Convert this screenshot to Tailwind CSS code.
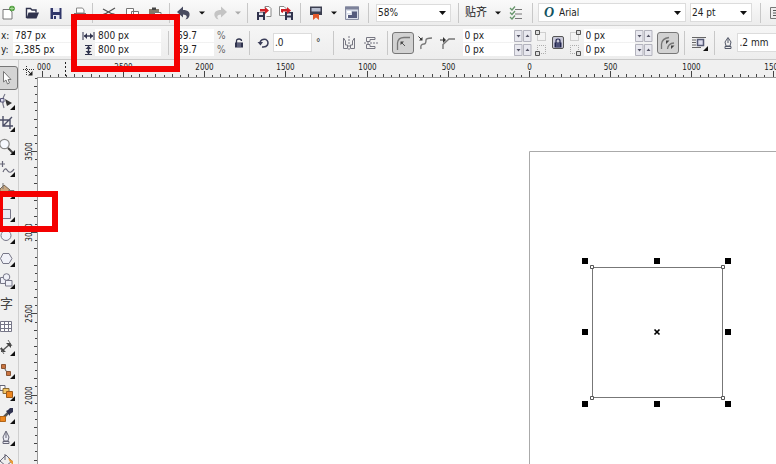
<!DOCTYPE html>
<html lang="zh-CN">
<head>
    <meta charset="UTF-8">
    <meta name="viewport" content="width=device-width, initial-scale=1.0">
    <title>Drawing</title>
    <script src="https://cdn.jsdelivr.net/npm/@tailwindcss/browser@4"></script>
</head>
<body class="relative flex h-screen flex-col overflow-hidden bg-[#f0f0f0] font-['DejaVu_Sans_Condensed','Noto_Sans','Noto_Sans_CJK_SC',sans-serif] text-[10px] leading-[13px] text-[#222]">

    <!-- Standard toolbar -->
    <header class="flex h-[26px] shrink-0 items-center overflow-hidden border-b border-[#d2d2d2] bg-gradient-to-b from-[#fafafa] to-[#ececec]">
        <div class="-ml-1 flex shrink-0">
            <button aria-label="New" class="flex w-6 justify-center">
                <svg class="size-4" viewBox="0 0 16 16"><path d="M3 4.500H10L12 7V14H3Z" fill="#fff" stroke="#777" /><circle cx="12" cy="3.500" r="2.800" fill="#4d9b3c" /><path d="M12 1.500v4M10 3.500h4" stroke="#a5d894" /></svg>
            </button>
            <button aria-label="Open" class="flex w-6 justify-center">
                <svg class="size-4" viewBox="0 0 16 16"><path d="M2.500 13V3.500H6.500L8 5H12V7.500" fill="#fff" stroke="#30334d" stroke-width="1.400" /><path d="M4.500 7.500H15L12.500 13.500H2.500Z" fill="#30334d" /></svg>
            </button>
            <button aria-label="Save" class="flex w-6 justify-center">
                <svg class="size-4" viewBox="0 0 16 16"><path d="M2.500 3H13.500V14H2.500Z" fill="#30366a" /><path d="M5 3H11.500V7H5ZM5 10H11.500V14H5Z" fill="#e8e9f2" /><path d="M6 11h2v3H6Z" fill="#30366a" /></svg>
            </button>
            <button aria-label="Print" class="flex w-6 justify-center">
                <svg class="size-4" viewBox="0 0 16 16"><path d="M4.500 3H10.500L12 5V8H4.500Z" fill="#fff" stroke="#888" /><path d="M2 8H14V14H2Z" fill="#777" /></svg>
            </button>
        </div>
        <i class="mr-1 h-5 w-px shrink-0 bg-[#c8c8c8]"></i>
        <div class="flex shrink-0">
            <button aria-label="Cut" class="flex w-[23px] justify-center">
                <svg class="size-4" viewBox="0 0 16 16" fill="none" stroke="#555" stroke-width="1.300"><path d="M2 4L13 10M14 3L4 9" /><circle cx="4" cy="11" r="2" /><circle cx="12" cy="11" r="2" /></svg>
            </button>
            <button aria-label="Copy" class="flex w-[23px] justify-center">
                <svg class="size-4" viewBox="0 0 16 16" fill="#fff" stroke="#777"><path d="M2.500 3.500H9.500V11.500H2.500ZM7.500 6.500H14.500V14.500H7.500Z" /></svg>
            </button>
            <button aria-label="Paste" class="flex w-[23px] justify-center">
                <svg class="size-4" viewBox="0 0 16 16"><path d="M2 4H12V14H2Z" fill="#857b6c" /><path d="M5 2.500H9V5H5Z" fill="#444" /><path d="M7.500 7.500H14V14H7.500Z" fill="#fff" stroke="#777" /></svg>
            </button>
        </div>
        <i class="ml-[3px] h-5 w-px shrink-0 bg-[#c8c8c8]"></i>
        <button aria-label="Undo" class="ml-1 flex w-5 shrink-0 justify-center">
            <svg class="size-4" viewBox="0 0 16 16"><path d="M1 7L7 1.500V5C12 5 15 7.500 13 12Q12 14 9.500 14.500Q13 10 7 9.500V12.500Z" fill="#484b60" /></svg>
        </button>
        <button aria-label="Undo list" class="flex w-4 shrink-0 justify-center"><svg class="h-1 w-[6px]" viewBox="0 0 6 4"><path d="M0 0.500H6L3 3.500Z" fill="#111" /></svg></button>
        <button aria-label="Redo" class="flex w-5 shrink-0 justify-center" disabled>
            <svg class="size-4" viewBox="0 0 16 16"><path d="M15 7L9 1.500V5C4 5 1 7.500 3 12Q4 14 6.500 14.500Q3 10 9 9.500V12.500Z" fill="#c4c4c4" /></svg>
        </button>
        <button aria-label="Redo list" class="flex w-4 shrink-0 justify-center" disabled><svg class="h-1 w-[6px]" viewBox="0 0 6 4"><path d="M0 0.500H6L3 3.500Z" fill="#aaa" /></svg></button>
        <i class="ml-px h-5 w-px shrink-0 bg-[#c8c8c8]"></i>
        <button aria-label="Import" class="ml-1 flex w-6 shrink-0 justify-center">
            <svg class="size-4" viewBox="0 0 16 16"><path d="M9 3.500V1.500H13L15 3.500V11.500H10.500" fill="#fff" stroke="#888" /><path d="M1 7H9V15H1Z" fill="#30334d" /><path d="M3 7.500H7V10H3ZM3 12H7V15H3Z" fill="#e4e4ee" /><path d="M4 4H9V2L13 5.500L9 9V6.500H4Z" fill="#cf2027" /></svg>
        </button>
        <button aria-label="Export" class="flex w-5 shrink-0 justify-center">
            <svg class="size-4" viewBox="0 0 16 16"><path d="M1.500 10.500V1.500H6L8 3.500V10.500Z" fill="#fff" stroke="#888" /><path d="M7 7H15V15H7Z" fill="#30334d" /><path d="M9 8.500H13V10.500H9ZM9 12.500H13V15H9Z" fill="#e4e4ee" /><path d="M3 7V4H9V2L13 5.500L9 9V6.500H5V8Z" fill="#cf2027" /></svg>
        </button>
        <i class="ml-1 h-5 w-px shrink-0 bg-[#c8c8c8]"></i>
        <button aria-label="Application launcher" class="ml-[3px] flex w-6 shrink-0 justify-center">
            <svg class="size-4" viewBox="0 0 16 16"><path d="M2 1.500H14V10H2Z" fill="#3c3f50" /><path d="M3.500 3H12.500V6.500H3.500Z" fill="#b8bfd0" /><path d="M5 9H11V15L8 12.500L5 15Z" fill="#e2592b" /></svg>
        </button>
        <button aria-label="Launcher list" class="flex w-3 shrink-0 justify-center"><svg class="h-1 w-[6px]" viewBox="0 0 6 4"><path d="M0 0.500H6L3 3.500Z" fill="#111" /></svg></button>
        <button aria-label="Welcome screen" class="flex w-6 shrink-0 justify-center">
            <svg class="size-4" viewBox="0 0 16 16"><path d="M1.500 2H14.500V14.500H1.500Z" fill="#d9deea" stroke="#8a8ea2" /><path d="M1 1.500H15V4.500H1Z" fill="#7d829a" /><path d="M3 6H7V8H3ZM3 9.500H7V13H3Z" fill="#fff" /><path d="M8 6.500H13V13H4V10H8Z" fill="#555b7d" /></svg>
        </button>
        <i class="ml-1 h-5 w-px shrink-0 bg-[#c8c8c8]"></i>
        <div class="relative ml-[7px] flex h-[18px] w-[75px] shrink-0 items-center border border-[#dcdcdc] bg-white">
            <select aria-label="Zoom level" class="w-full appearance-none bg-transparent pl-px outline-none"><option>58%</option><option>100%</option></select>
            <svg class="pointer-events-none absolute right-1 h-1 w-[7px]" viewBox="0 0 7 4"><path d="M0 0H7L3.500 4Z" fill="#111" /></svg>
        </div>
        <i class="ml-[7px] h-5 w-px shrink-0 bg-[#c8c8c8]"></i>
        <button class="ml-[6px] flex shrink-0 items-center gap-2 text-[11px]">贴齐 <svg class="h-1 w-[6px]" viewBox="0 0 6 4"><path d="M0 0.500H6L3 3.500Z" fill="#111" /></svg></button>
        <button aria-label="Options" class="ml-[3px] flex w-6 shrink-0 justify-center">
            <svg class="size-4" viewBox="0 0 16 16" fill="none"><path d="M7 4.500H14M7 9H14M7 13.500H14" stroke="#777" /><path d="M2 3L4 5L7 1.500M2 7.500L4 9.500L7 6M2 12L4 14L7 10.500" stroke="#65966a" stroke-width="1.300" /></svg>
        </button>
        <i class="ml-1 h-5 w-px shrink-0 bg-[#c8c8c8]"></i>
        <div class="relative ml-[5px] flex h-[19px] w-[148px] shrink-0 items-center border border-[#dcdcdc] bg-white">
            <span class="w-5 shrink-0 text-center font-['Liberation_Serif',serif] text-[14px] font-bold italic text-[#125260]">O</span>
            <select aria-label="Font" class="w-full appearance-none bg-transparent outline-none"><option>Arial</option></select>
            <svg class="pointer-events-none absolute right-1 h-1 w-[7px]" viewBox="0 0 7 4"><path d="M0 0H7L3.500 4Z" fill="#111" /></svg>
        </div>
        <div class="relative ml-1 flex h-[19px] w-[62px] shrink-0 items-center border border-[#dcdcdc] bg-white">
            <select aria-label="Font size" class="w-full appearance-none bg-transparent pl-px outline-none"><option>24 pt</option></select>
            <svg class="pointer-events-none absolute right-1 h-1 w-[7px]" viewBox="0 0 7 4"><path d="M0 0H7L3.500 4Z" fill="#111" /></svg>
        </div>
        <i class="ml-2 h-5 w-px shrink-0 bg-[#c8c8c8]"></i>
        <button aria-label="Text properties" class="ml-2 shrink-0">
            <svg class="size-4" viewBox="0 0 16 16"><path d="M1.500 2.500H13V13.500H1.500Z" fill="#eee" stroke="#777" /><path d="M4 5.500H10M4 8H10M4 10.500H10" stroke="#555" /></svg>
        </button>
    </header>

    <!-- Property bar -->
    <section class="flex h-[34px] shrink-0 items-center overflow-hidden border-b border-[#c9c9c9] bg-gradient-to-b from-[#f6f6f6] to-[#ededed]">
        <div class="flex w-[82px] shrink-0 flex-col gap-px pl-px">
            <label class="flex items-center"><span class="w-3">x:</span><input value="787 px" class="h-[13px] w-[58px] bg-white pl-[2px] outline-none"></label>
            <label class="flex items-center"><span class="w-3">y:</span><input value="2,385 px" class="h-[13px] w-[58px] bg-white pl-[2px] outline-none"></label>
        </div>
        <div class="flex w-[86px] shrink-0 flex-col gap-px">
            <label class="flex items-center" aria-label="Width">
                <svg class="h-3 w-[13px]" viewBox="0 0 13 12" fill="none" stroke="#30334d"><path d="M1 2V10M12 2V10" /><path d="M2 6H11" stroke-width="1.400" /><path d="M5 3L2 6L5 9ZM8 3L11 6L8 9Z" fill="#30334d" stroke="none" /></svg>
                <input value="800 px" class="h-[13px] w-[66px] bg-white pl-[3px] outline-none">
            </label>
            <label class="flex items-center" aria-label="Height">
                <svg class="h-3 w-[13px]" viewBox="0 0 13 12" fill="none" stroke="#30334d"><path d="M3 1.500H10M3 10.500H10" /><path d="M6.500 2V10" stroke-width="1.400" /><path d="M3.500 5L6.500 2L9.500 5ZM3.500 7L6.500 10L9.500 7Z" fill="#30334d" stroke="none" /></svg>
                <input value="800 px" class="h-[13px] w-[66px] bg-white pl-[3px] outline-none">
            </label>
        </div>
        <i class="h-6 w-px shrink-0 bg-[#c8c8c8]"></i>
        <div class="ml-[5px] flex w-[54px] shrink-0 flex-col gap-px">
            <label class="flex items-center gap-[3px]"><input value="69.7" class="h-[13px] w-10 bg-white pl-[3px] outline-none"><span class="text-[#666]">%</span></label>
            <label class="flex items-center gap-[3px]"><input value="69.7" class="h-[13px] w-10 bg-white pl-[3px] outline-none"><span class="text-[#666]">%</span></label>
        </div>
        <button aria-label="Lock ratio" class="ml-[5px] shrink-0">
            <svg class="h-[10px] w-3" viewBox="0 0 12 10"><path d="M3.500 5V3Q3.500 1 6 1Q8.500 1 8.500 3" fill="none" stroke="#30334d" stroke-width="1.300" /><path d="M2 4.500H10V9.500H2Z" fill="#30334d" /><path d="M4 6H8M4 8H8" stroke="#8a8da8" /></svg>
        </button>
        <i class="ml-[4px] h-6 w-px shrink-0 bg-[#c8c8c8]"></i>
        <label class="ml-[7px] flex shrink-0 items-center gap-[3px]" aria-label="Rotation">
            <svg class="h-3 w-[13px]" viewBox="0 0 13 12"><path d="M3 5Q5 1.500 9 2.500Q12 4.500 10.500 8Q9 10.500 5 10" fill="none" stroke="#3a3d58" stroke-width="1.500" /><path d="M0.500 5H6L3.500 8.500Z" fill="#3a3d58" /></svg>
            <input value=".0" class="h-[19px] w-[39px] border border-[#dcdcdc] bg-white pl-px outline-none">
            <span class="pl-px">°</span>
        </label>
        <i class="ml-3 h-6 w-px shrink-0 bg-[#c8c8c8]"></i>
        <div class="ml-[7px] flex shrink-0 gap-[6px]">
            <button aria-label="Mirror horizontally"><svg class="size-4" viewBox="0 0 16 16" fill="none" stroke="#777782"><path d="M2.500 3V13.500H6.500V10H4.500V6ZM13.500 3V13.500H9.500V10H11.500V6Z" /><path d="M8 1V15" stroke-dasharray="2 1" /></svg></button>
            <button aria-label="Mirror vertically"><svg class="size-4" viewBox="0 0 16 16" fill="none" stroke="#777782"><path d="M12 2.500H3.500V6.500H7V4.500H12ZM12 13.500H3.500V9.500H7V11.500H12Z" /><path d="M1 8H15" stroke-dasharray="2 1" /></svg></button>
        </div>
        <i class="ml-2 h-6 w-px shrink-0 bg-[#c8c8c8]"></i>
        <button aria-label="Round corner" class="ml-1 flex size-[22px] shrink-0 items-center justify-center rounded-[3px] border border-[#777] bg-[#d2d2d2]">
            <svg class="size-4" viewBox="0 0 16 16" fill="none" stroke="#555"><path d="M2.500 15V8Q3 2.500 9 2.500H15" stroke="#777" stroke-width="1.300" /><path d="M10 11L6.500 7.500" /><path d="M5.500 6.500H9L5.500 10Z" fill="#444" stroke="none" /></svg>
        </button>
        <button aria-label="Scalloped corner" class="ml-[3px] shrink-0">
            <svg class="size-4" viewBox="0 0 16 16" fill="none" stroke="#777"><path d="M4 14Q3 9 7 9Q9 9 9 5Q9 3 15 3" stroke-width="1.400" /><path d="M1.500 1.500L4 4" stroke="#333" /><path d="M5.500 2V5.500H2Z" fill="#333" stroke="none" /></svg>
        </button>
        <button aria-label="Chamfered corner" class="ml-[6px] shrink-0">
            <svg class="size-4" viewBox="0 0 16 16" fill="none" stroke="#777"><path d="M4 14V9.500L10 4H16" stroke-width="1.400" /><path d="M1 5H6" stroke="#333" /><path d="M4 2L7 5L4 8Z" fill="#333" stroke="none" /></svg>
        </button>
        <div class="ml-2 flex shrink-0 flex-col gap-px">
            <div class="flex items-center"><input aria-label="Top left radius" value="0 px" class="h-[13px] w-[51px] bg-white pl-[2px] outline-none"><svg class="h-[12px] w-[18px]" viewBox="0 0 18 12"><path d="M0.500 0.500H8V11.500H0.500ZM9.500 0.500H17V11.500H9.500Z" fill="#e8e8ef" stroke="#b3b3bd" /><path d="M2.500 5H6.500L4.500 7.500ZM11.500 7H15.500L13.500 4.500Z" fill="#556" /></svg></div>
            <div class="flex items-center"><input aria-label="Bottom left radius" value="0 px" class="h-[13px] w-[51px] bg-white pl-[2px] outline-none"><svg class="h-[12px] w-[18px]" viewBox="0 0 18 12"><path d="M0.500 0.500H8V11.500H0.500ZM9.500 0.500H17V11.500H9.500Z" fill="#e8e8ef" stroke="#b3b3bd" /><path d="M2.500 5H6.500L4.500 7.500ZM11.500 7H15.500L13.500 4.500Z" fill="#556" /></svg></div>
        </div>
        <svg class="ml-[3px] h-[26px] w-3 shrink-0" viewBox="0 0 12 26" fill="none" stroke="#aaa"><path d="M3.500 2.500H10.500V10.500H2.500V4M2.500 22V15.500H10.500V23.500H4" stroke-dasharray="1 1" /><path d="M0.500 0.500H4.500V4.500H0.500ZM0.500 21.500H4.500V25.500H0.500Z" fill="#ddd" stroke="#555" /></svg>
        <button aria-label="Edit corners together" class="ml-[5px] flex h-[13px] w-3 shrink-0 items-center justify-center rounded-[2px] border border-[#555] bg-[#c9c9d8]">
            <svg class="h-[10px] w-[10px]" viewBox="0 0 10 10"><path d="M3 5V3Q3 1 5 1Q7 1 7 3V5" fill="none" stroke="#23264f" stroke-width="1.200" /><path d="M1.500 4.500H8.500V9.500H1.500Z" fill="#23264f" /><path d="M3 6H7M3 8H7" stroke="#777aa0" /></svg>
        </button>
        <svg class="ml-[6px] h-[26px] w-3 shrink-0" viewBox="0 0 12 26" fill="none" stroke="#aaa"><path d="M7.500 2.500H0.500V10.500H8.500V4M8.500 22V15.500H0.500V23.500H7" stroke-dasharray="1 1" /><path d="M6.500 0.500H10.500V4.500H6.500ZM6.500 21.500H10.500V25.500H6.500Z" fill="#ddd" stroke="#555" /></svg>
        <div class="ml-[2px] flex shrink-0 flex-col gap-px">
            <div class="flex items-center"><input aria-label="Top right radius" value="0 px" class="h-[13px] w-[51px] bg-white pl-[2px] outline-none"><svg class="h-[12px] w-[18px]" viewBox="0 0 18 12"><path d="M0.500 0.500H8V11.500H0.500ZM9.500 0.500H17V11.500H9.500Z" fill="#e8e8ef" stroke="#b3b3bd" /><path d="M2.500 5H6.500L4.500 7.500ZM11.500 7H15.500L13.500 4.500Z" fill="#556" /></svg></div>
            <div class="flex items-center"><input aria-label="Bottom right radius" value="0 px" class="h-[13px] w-[51px] bg-white pl-[2px] outline-none"><svg class="h-[12px] w-[18px]" viewBox="0 0 18 12"><path d="M0.500 0.500H8V11.500H0.500ZM9.500 0.500H17V11.500H9.500Z" fill="#e8e8ef" stroke="#b3b3bd" /><path d="M2.500 5H6.500L4.500 7.500ZM11.500 7H15.500L13.500 4.500Z" fill="#556" /></svg></div>
        </div>
        <button aria-label="Relative corner scaling" class="ml-1 flex size-[22px] shrink-0 items-center justify-center rounded-[3px] border border-[#777] bg-[#d2d2d2]">
            <svg class="size-4" viewBox="0 0 16 16" fill="none" stroke="#777"><path d="M1.500 14V9Q2 3.500 9 2.500M7.500 14Q8 8.500 14 8" stroke-width="1.300" /><path d="M6 5.500H9.500L6 9ZM11 10.500H14.500L11 14Z" fill="#444" stroke="none" /></svg>
        </button>
        <i class="ml-[5px] h-6 w-px shrink-0 bg-[#c8c8c8]"></i>
        <button aria-label="Wrap text" class="ml-[7px] shrink-0">
            <svg class="size-4" viewBox="0 0 16 16"><path d="M0 2.500H14M0 5H4M0 7.500H4M0 10H4M0 12.500H9" stroke="#666" /><path d="M5.500 4.500H11.500V10.500H5.500Z" fill="#dde" stroke="#555a75" stroke-width="1.500" /><path d="M16 11V16H11Z" fill="#111" /></svg>
        </button>
        <i class="ml-[6px] h-6 w-px shrink-0 bg-[#c8c8c8]"></i>
        <label class="ml-[7px] flex min-w-0 flex-1 items-center" aria-label="Outline width">
            <svg class="h-[14px] w-3 shrink-0" viewBox="0 0 12 14" fill="#eee" stroke="#555a6a"><path d="M6 1.500L9 6L8 10H4L3 6Z" /><path d="M6 2V7" /><path d="M3 10.500H9V12.500H3Z" /></svg>
            <input value=".2 mm" class="ml-[3px] h-[19px] min-w-0 flex-1 border border-r-0 border-[#dcdcdc] bg-white pl-[2px] outline-none">
        </label>
    </section>

    <div class="flex min-h-0 flex-1">
        <!-- Toolbox -->
        <nav class="-mb-2 flex w-[19px] shrink-0 flex-col border-r border-[#cfcfcf] pt-[6px]">
            <button aria-label="Pick" class="-ml-1 flex min-h-0 flex-1 items-center rounded-[3px] border border-[#777] bg-[#d4d4d4] pl-[3px]">
                <svg class="size-4" viewBox="0 0 16 16"><path d="M3.500 1.500V12L6 10L7.500 14L9.500 13L8 9.500H11Z" fill="#fff" stroke="#777" /></svg>
            </button>
            <button aria-label="Shape" class="flex min-h-0 flex-1 items-center">
                <svg class="h-[18px] w-4" viewBox="0 0 16 18"><path d="M5 1Q1 7 4 15" fill="none" stroke="#778" stroke-width="1.200" /><path d="M0.500 5.500H4V9H0.500Z" fill="#dde" stroke="#557" /><path d="M5 6L12 10L7 13Z" fill="#333" /><path d="M15 12V17H10Z" fill="#111" /></svg>
            </button>
            <button aria-label="Crop" class="flex min-h-0 flex-1 items-center">
                <svg class="h-[18px] w-4" viewBox="0 0 16 18"><path d="M0 5H10V14M3 1V11H13M3 11L12 2" fill="none" stroke="#4b4e66" stroke-width="1.400" /><path d="M15 12V17H10Z" fill="#111" /></svg>
            </button>
            <button aria-label="Zoom" class="flex min-h-0 flex-1 items-center">
                <svg class="h-[18px] w-4" viewBox="0 0 16 18"><circle cx="4.500" cy="6" r="4.700" fill="#f6f9ff" stroke="#888" stroke-width="1.200" /><path d="M8 10L13 15" stroke="#444" stroke-width="2" /><path d="M15 12V17H10Z" fill="#111" /></svg>
            </button>
            <button aria-label="Freehand" class="flex min-h-0 flex-1 items-center">
                <svg class="h-[18px] w-4" viewBox="0 0 16 18"><path d="M2.500 1V7M0 4H5M3 12Q5 7 7 10T11 12T14 9" fill="none" stroke="#667" stroke-width="1.200" /><path d="M15 12V17H10Z" fill="#111" /></svg>
            </button>
            <button aria-label="Smart fill" class="flex min-h-0 flex-1 items-center">
                <svg class="h-[18px] w-4" viewBox="0 0 16 18"><path d="M0 7L4 3L10 8L6 12L0 10Z" fill="#c9a780" stroke="#776655" /><path d="M3 7V1M8.500 8.500H14V14H8.500Z" fill="#eee" stroke="#777" /><path d="M15 12V17H10Z" fill="#111" /></svg>
            </button>
            <button aria-label="Rectangle" class="flex min-h-0 flex-1 items-center">
                <svg class="h-[18px] w-4" viewBox="0 0 16 18"><path d="M0 4.500H10.500V13.500H0Z" fill="#e9eaf2" stroke="#778" /><path d="M15 12V17H10Z" fill="#111" /></svg>
            </button>
            <button aria-label="Ellipse" class="flex min-h-0 flex-1 items-center">
                <svg class="h-[18px] w-4" viewBox="0 0 16 18"><circle cx="6" cy="8.500" r="5" fill="#f0f1f8" stroke="#778" /><path d="M15 12V17H10Z" fill="#111" /></svg>
            </button>
            <button aria-label="Polygon" class="flex min-h-0 flex-1 items-center">
                <svg class="h-[18px] w-4" viewBox="0 0 16 18"><path d="M3 3.500H9L12 8.500L9 13.500H3L0.500 8.500Z" fill="#f0f1f8" stroke="#778" /><path d="M15 12V17H10Z" fill="#111" /></svg>
            </button>
            <button aria-label="Basic shapes" class="flex min-h-0 flex-1 items-center">
                <svg class="h-[18px] w-4" viewBox="0 0 16 18" fill="#f0f1f8" stroke="#778"><path d="M0.500 5.500H7L5 11.500H0.500Z" /><circle cx="6.500" cy="5" r="3.300" /><path d="M5.500 8.500H12V14H5.500Z" /><path d="M15 12V17H10Z" fill="#111" stroke="none" /></svg>
            </button>
            <button class="flex min-h-0 flex-1 items-center text-[13px] text-[#444]">字</button>
            <button aria-label="Table" class="flex min-h-0 flex-1 items-center">
                <svg class="h-[18px] w-4" viewBox="0 0 16 18"><path d="M0.500 4.500H11.500V14.500H0.500ZM0 7.500H12M0 11.500H12M4.500 4V15M8.500 4V15" fill="#fff" stroke="#778" /></svg>
            </button>
            <button aria-label="Dimension" class="flex min-h-0 flex-1 items-center">
                <svg class="h-[18px] w-4" viewBox="0 0 16 18"><path d="M2 12L10 5" stroke="#555" stroke-width="1.400" /><path d="M1 8V13H6ZM6 4H11V9Z" fill="#444" /><path d="M0 9L4 15M8 1L12 7" stroke="#666" /><path d="M15 12V17H10Z" fill="#111" /></svg>
            </button>
            <button aria-label="Connector" class="flex min-h-0 flex-1 items-center">
                <svg class="h-[18px] w-4" viewBox="0 0 16 18"><path d="M3 4L8 12" stroke="#555" /><path d="M1.500 2.500H5.500V6.500H1.500ZM6.500 9.500H10.500V13.500H6.500Z" fill="#c97440" stroke="#8a5534" /><path d="M15 12V17H10Z" fill="#111" /></svg>
            </button>
            <button aria-label="Blend" class="flex min-h-0 flex-1 items-center">
                <svg class="h-[18px] w-4" viewBox="0 0 16 18"><path d="M0 1.500H5V6.500H0Z" fill="#fff" stroke="#667" /><path d="M3 4.500H9V9.500H3Z" fill="#f5c665" stroke="#8a6a34" /><path d="M6.500 7.500H12.500V13.500H6.500Z" fill="#ee861d" stroke="#9d5a1a" /><path d="M15 12V17H10Z" fill="#111" /></svg>
            </button>
            <button aria-label="Eyedropper" class="flex min-h-0 flex-1 items-center">
                <svg class="h-[18px] w-4" viewBox="0 0 16 18"><path d="M4 10L9 5" stroke="#555" stroke-width="2.500" /><path d="M6 4L8 3L10 1L13 1V5L10 7L10 9Z" fill="#2f3350" /><path d="M0 9.500H5.500V14.500H0Z" fill="#ee861d" stroke="#b06519" /><path d="M15 12V17H10Z" fill="#111" /></svg>
            </button>
            <button aria-label="Outline pen" class="flex min-h-0 flex-1 items-center">
                <svg class="h-[18px] w-4" viewBox="0 0 16 18" fill="#e9eaf2" stroke="#667"><path d="M6 2L9 8L8 12H4L3 8Z" /><path d="M6 3V9M3 12.500H9V14.500H3Z" /><path d="M15 12V17H10Z" fill="#111" stroke="none" /></svg>
            </button>
            <button aria-label="Fill" class="flex min-h-0 flex-1 items-center">
                <svg class="h-[18px] w-4" viewBox="0 0 16 18"><path d="M0 9L6 3L12 9L6 14Z" fill="#eee" stroke="#667" /><path d="M5 8V2" stroke="#667" /><path d="M8 6L13 9V13L10 10Z" fill="#e89a3a" /></svg>
            </button>
        </nav>

        <!-- Rulers and drawing area -->
        <main class="grid min-w-0 flex-1 grid-cols-[18px_1fr] grid-rows-[17px_1fr]">
            <svg class="h-[17px] w-[18px]" viewBox="0 0 18 17" fill="none" stroke="#333"><path d="M7.500 6V16M4 9.500H15" stroke-dasharray="1 1" /><path d="M9 11L12 14" /><path d="M13.500 11V15.500H9Z" fill="#222" stroke="none" /></svg>
            <svg id="ruler-x" class="h-full w-full overflow-hidden"></svg>
            <svg id="ruler-y" class="h-full w-full overflow-hidden"></svg>
            <div class="overflow-hidden border-l border-t border-[#999] bg-white">
                <svg class="h-full w-full" fill="none">
                    <path d="M2000 73.500H491.500V2000" stroke="#aaa" />
                    <path d="M554.500 189.500H684.500V319.500H554.500Z" stroke="#777" />
                    <g fill="#fff" stroke="#555">
                        <path d="M552.500 187.500h3v3h-3ZM683.500 187.500h3v3h-3ZM552.500 318.500h3v3h-3ZM683.500 318.500h3v3h-3Z" />
                    </g>
                    <path d="M544 180h6v6h-6ZM616 180h6v6h-6ZM687 180h6v6h-6ZM544 251h6v6h-6ZM687 251h6v6h-6ZM544 323h6v6h-6ZM616 323h6v6h-6ZM687 323h6v6h-6Z" fill="#000" />
                    <path d="M616.500 251.500L621.500 256.500M621.500 251.500L616.500 256.500" stroke="#000" stroke-width="1.700" />
                </svg>
            </div>
        </main>
    </div>

    <!-- Highlight frames -->
    <div class="pointer-events-none absolute left-[71px] top-[14px] h-[58px] w-[109px] border-[6px] border-[#f40000]"></div>
    <div class="pointer-events-none absolute -left-[3px] top-[191px] h-[41px] w-[61px] border-[6px] border-[#f40000]"></div>

    <script>
        const STEP = 81.2; // pixels per 500 units

        function line(x1, y1, x2, y2) {
            return `<path d="M${x1} ${y1}L${x2} ${y2}" stroke="#444"/>`;
        }

        // Horizontal ruler, zero sits at the left page edge
        let out = '';
        for (let i = -60; i <= 60; i++) {
            const x = Math.round(492 + i * STEP / 10) + 0.5;
            const len = i % 10 === 0 ? 6 : i % 2 === 0 ? 3 : 2;
            out += line(x, 17 - len, x, 17);
            // the first label has its leading digit scrolled out of view
            if (i === -60) {
                out += '<text x="0" y="10" font-size="8" fill="#222">000</text>';
            } else if (i % 10 === 0 && i <= 30) {
                out += `<text x="${x}" y="10" text-anchor="middle" font-size="8" fill="#222">${Math.abs(i) * 50}</text>`;
            }
        }
        out += '<path d="M28.5 2V17" stroke="#222" stroke-dasharray="2 2"/>';
        document.getElementById('ruler-x').innerHTML = out;

        // Vertical ruler, 3500 sits at the top page edge
        out = '';
        for (let i = -9; i <= 60; i++) {
            const y = Math.round(74 + i * STEP / 10) + 0.5;
            const len = i % 10 === 0 ? 6 : i % 2 === 0 ? 3 : 2;
            out += line(18 - len, y, 18, y);
            if (i % 10 === 0 && i <= 30) {
                out += `<text transform="translate(13 ${y}) rotate(-90)" text-anchor="middle" font-size="8" fill="#222">${3500 - i * 50}</text>`;
            }
        }
        document.getElementById('ruler-y').innerHTML = out;
    </script>
</body>
</html>
